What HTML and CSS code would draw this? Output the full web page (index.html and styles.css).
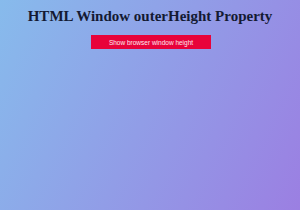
FILE: index.html
```html
<!DOCTYPE html>
<html>
<head>
<meta charset="utf-8">
<link rel="stylesheet" href="styles.css">
</head>
<body>
<div class="page">
  <h1 class="title">HTML Window outerHeight Property</h1>
  <button class="btn">Show browser window height</button>
</div>
</body>
</html>
```
FILE: styles.css
```css
html, body {
  margin: 0;
  padding: 0;
  height: 100%;
}
body {
  background: linear-gradient(115deg, #87bbec 0%, #9b7fe2 100%);
}
.page {
  display: flex;
  flex-direction: column;
  align-items: center;
  padding-top: 7px;
}
.title {
  margin: 0;
  font-family: "Liberation Serif", serif;
  font-weight: bold;
  font-size: 15px;
  line-height: 18px;
  color: #141a33;
}
.btn {
  margin-top: 10px;
  margin-left: 2px;
  width: 120px;
  height: 14px;
  border: none;
  background: #e8033a;
  color: #fde8ee;
  font-family: "Liberation Sans", sans-serif;
  font-size: 6.5px;
  padding: 0;
}
```
